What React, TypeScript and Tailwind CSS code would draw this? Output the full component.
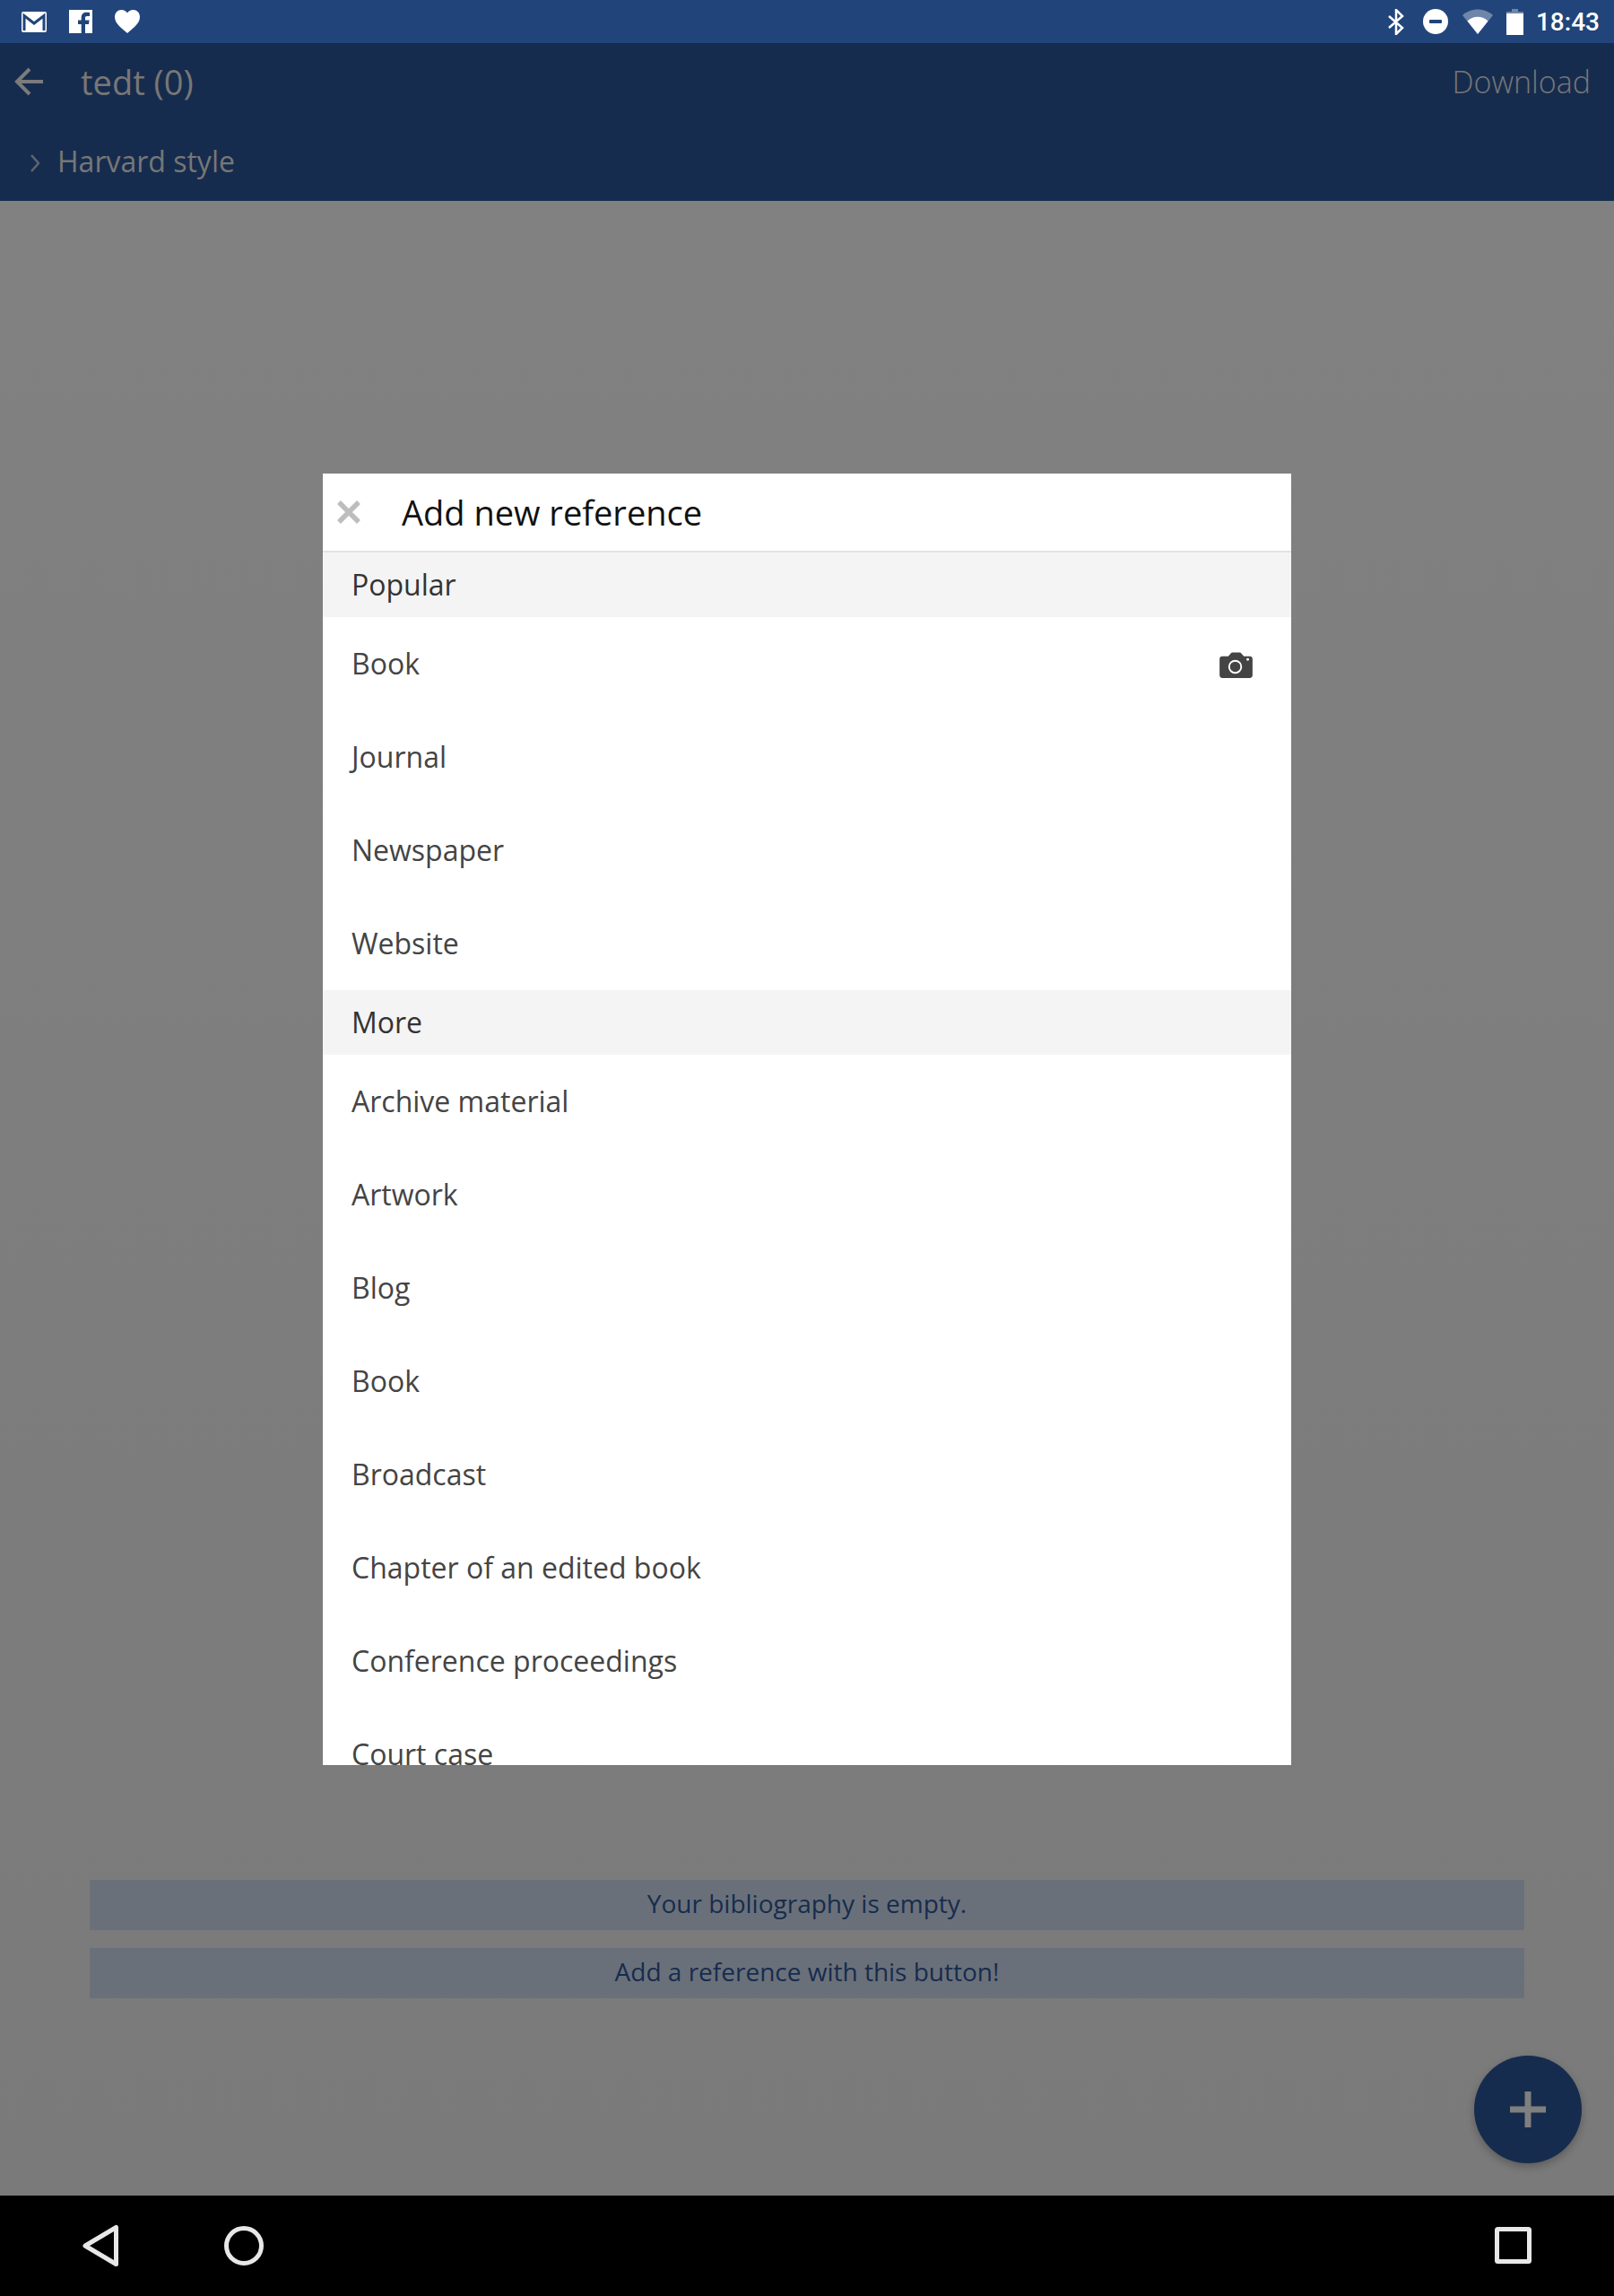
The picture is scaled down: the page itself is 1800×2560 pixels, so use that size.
import React from "react";

const sans = "font-['Open_Sans','Noto_Sans',sans-serif]";

function Section({ label }: { label: string }) {
  return (
    <div className="h-[72px] shrink-0 flex items-center pl-[32px] bg-[#f4f4f4] text-[#333333] text-[32px]">
      {label}
    </div>
  );
}

function Row({ label, camera }: { label: string; camera?: boolean }) {
  return (
    <div className="h-[104px] shrink-0 flex items-center justify-between pl-[32px] pr-[43px] text-[#444444] text-[32px]">
      <span>{label}</span>
      {camera && (
        <svg className="mt-[2px]" width="37" height="29" viewBox="0 0 38 30">
          <path
            d="M3 5h7l3-3.500C13.600 1 14 .5 15 .5h8c1 0 1.400.5 2 1L28 5h7c1.600 0 3 1.400 3 3v19c0 1.600-1.400 3-3 3H3c-1.600 0-3-1.400-3-3V8c0-1.600 1.400-3 3-3z"
            fill="#444444"
          />
          <circle cx="18" cy="17" r="7" fill="none" stroke="#ffffff" strokeWidth="2" />
          <circle cx="32.500" cy="8.500" r="1.500" fill="#ffffff" />
        </svg>
      )}
    </div>
  );
}

export default function App() {
  return (
    <div className={`relative w-[1800px] h-[2560px] flex flex-col overflow-hidden ${sans}`}>
      {/* status bar */}
      <div className="h-[48px] shrink-0 bg-[#21457b] flex items-center justify-between pl-[24px] pr-[16px]">
        <div className="flex items-center">
          <svg width="28" height="23" viewBox="0 0 28 23">
            <rect width="28" height="23" rx="2" fill="#ffffff" />
            <path d="M3 21V4.500L14 13 25 4.500V21" fill="none" stroke="#21457b" strokeWidth="3" />
          </svg>
          <svg className="ml-[25px]" width="26" height="26" viewBox="0 0 26 26">
            <path
              d="M0 0h26v26h-8V16h4l.6-4.500H18V9c0-1.300.4-2 2.200-2H23V3c-.6-.1-2-.2-3.500-.2-3.400 0-5.800 2-5.800 5.800v2.900H10V16h3.700v10H0z"
              fill="#ffffff"
            />
          </svg>
          <svg className="ml-[25px]" width="28" height="26" viewBox="0 0 28 26">
            <path
              d="M14 26C4 18 0 13.500 0 7.800 0 3.300 3.300 0 7.500 0 10.200 0 12.700 1.300 14 3.500 15.300 1.300 17.800 0 20.500 0 24.700 0 28 3.300 28 7.800 28 13.500 24 18 14 26z"
              fill="#ffffff"
            />
          </svg>
        </div>
        <div className="flex items-center">
          <svg width="18" height="29" viewBox="0 0 18 29">
            <path
              d="M1 8l15 13-7 7V1l7 7L1 21"
              fill="none"
              stroke="#ffffff"
              strokeWidth="2.500"
              strokeLinejoin="miter"
            />
          </svg>
          <svg className="ml-[21px]" width="28" height="28" viewBox="0 0 28 28">
            <circle cx="14" cy="14" r="14" fill="#ffffff" />
            <rect x="7" y="12" width="14" height="4" rx="1" fill="#21457b" />
          </svg>
          <svg className="ml-[16px]" width="34" height="28" viewBox="0 0 34 28">
            <path d="M17 28L0 7C4.500 3 10.500 .5 17 .5S29.500 3 34 7z" fill="#ffffff" fillOpacity="0.35" />
            <path d="M17 28L5.500 13.500C8.500 10.500 12.500 8.800 17 8.800s8.500 1.700 11.500 4.700z" fill="#ffffff" />
          </svg>
          <svg className="ml-[15px]" width="19" height="29" viewBox="0 0 19 29">
            <path d="M6 0h7v3h6v26H0V3h6z" fill="#ffffff" fillOpacity="0.35" />
            <path d="M0 5h19v24H0z" fill="#ffffff" />
          </svg>
          <span className="ml-[14px] mt-[2px] font-['Roboto',sans-serif] font-medium text-white text-[28px] leading-none">
            18:43
          </span>
        </div>
      </div>

      {/* toolbar */}
      <div className="h-[176px] shrink-0 bg-[#162c4e] text-[#777777] flex flex-col">
        <div className="h-[88px] pb-[2px] flex items-center justify-between pl-[16px] pr-[26px]">
          <div className="flex items-center">
            <svg width="32" height="32" viewBox="0 0 32 32">
              <path d="M32 16H3M17 2L3 16l14 14" fill="none" stroke="#7b7b7b" strokeWidth="4" />
            </svg>
            <span className="ml-[42px] text-[38px]">tedt (0)</span>
          </div>
          <span className="text-[34px] font-light">Download</span>
        </div>
        <div className="h-[88px] flex items-center pl-[34px]">
          <svg className="mt-[4px]" width="10" height="20" viewBox="0 0 10 20">
            <path d="M1 1l8 9-8 9" fill="none" stroke="#5f6670" strokeWidth="2.500" />
          </svg>
          <span className="ml-[20px] text-[32px]">Harvard style</span>
        </div>
      </div>

      {/* page content */}
      <div className="relative flex-1 bg-gradient-to-b from-[#818181] to-[#7a7a7a] flex flex-col justify-end px-[100px] pb-[220px] gap-[20px]">
        <div className="h-[56px] pb-[5px] bg-[#6a7079] text-[#162c4e] text-[28px] flex items-center justify-center">
          Your bibliography is empty.
        </div>
        <div className="h-[56px] pb-[5px] bg-[#6a7079] text-[#162c4e] text-[28px] flex items-center justify-center">
          Add a reference with this button!
        </div>

        {/* floating button */}
        <div className="absolute left-[1644px] top-[2068px] w-[120px] h-[120px] rounded-full bg-[#162c4e] shadow-[0_4px_10px_rgba(0,0,0,0.25)] flex items-center justify-center">
          <svg width="40" height="40" viewBox="0 0 40 40">
            <path d="M20 0v40M0 20h40" fill="none" stroke="#7f7f7f" strokeWidth="7" />
          </svg>
        </div>

        {/* dialog */}
        <div className="absolute left-[360px] top-[304px] w-[1080px] h-[1440px] bg-white flex flex-col overflow-hidden">
          <div className="h-[88px] shrink-0 flex items-center border-b-2 border-[#e2e2e2] pl-[16px]">
            <svg width="26" height="26" viewBox="0 0 26 26">
              <path d="M2 2l22 22M24 2L2 24" fill="none" stroke="#bdbdbd" strokeWidth="5.500" />
            </svg>
            <span className="ml-[46px] text-[38px] text-[#111111]">Add new reference</span>
          </div>
          <Section label="Popular" />
          <Row label="Book" camera />
          <Row label="Journal" />
          <Row label="Newspaper" />
          <Row label="Website" />
          <Section label="More" />
          <Row label="Archive material" />
          <Row label="Artwork" />
          <Row label="Blog" />
          <Row label="Book" />
          <Row label="Broadcast" />
          <Row label="Chapter of an edited book" />
          <Row label="Conference proceedings" />
          <Row label="Court case" />
        </div>
      </div>

      {/* nav bar */}
      <div className="h-[112px] shrink-0 bg-black relative">
        <svg className="absolute left-[90px] top-[32px]" width="44" height="48" viewBox="0 0 44 48">
          <path d="M39.500 3.500v41L5 24z" fill="none" stroke="#e8e8e8" strokeWidth="5" strokeLinejoin="round" />
        </svg>
        <svg className="absolute left-[250px] top-[34px]" width="44" height="44" viewBox="0 0 44 44">
          <circle cx="22" cy="22" r="19.500" fill="none" stroke="#e8e8e8" strokeWidth="5" />
        </svg>
        <svg className="absolute left-[1667px] top-[35px]" width="41" height="41" viewBox="0 0 41 41">
          <rect x="2.500" y="2.500" width="36" height="36" rx="1" fill="none" stroke="#e8e8e8" strokeWidth="5" />
        </svg>
      </div>
    </div>
  );
}
